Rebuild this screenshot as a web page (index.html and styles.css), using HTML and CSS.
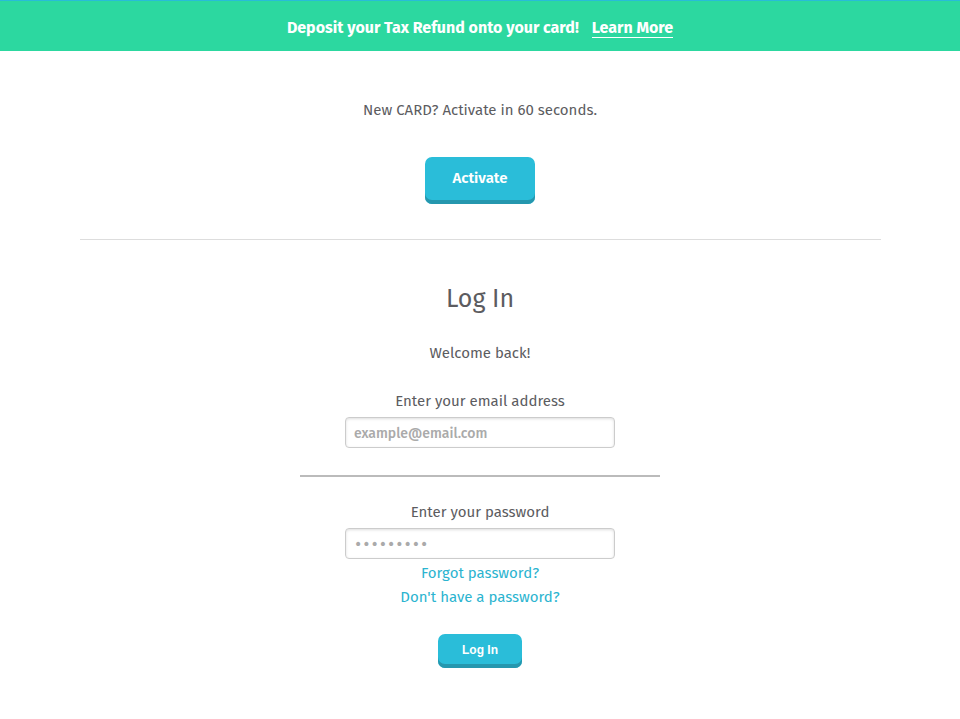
FILE: index.html
```html
<!DOCTYPE html>
<html lang="en">
<head>
<meta charset="utf-8">
<meta name="viewport" content="width=device-width, initial-scale=1">
<title>Log In</title>
<link rel="stylesheet" href="styles.css">
</head>
<body>
<header class="banner">
  <p class="banner-text">Deposit your Tax Refund onto your card!</p>
  <a class="banner-link" href="#">Learn More</a>
</header>
<main class="page">
  <section class="activate">
    <p class="copy">New CARD? Activate in 60 seconds.</p>
    <button class="button button-large" type="button">Activate</button>
  </section>
  <section class="login">
    <h1 class="title">Log In</h1>
    <p class="copy">Welcome back!</p>
    <form class="form">
      <div class="field field-email">
        <label for="email">Enter your email address</label>
        <input id="email" type="email" placeholder="example@email.com">
      </div>
      <div class="field">
        <label for="password">Enter your password</label>
        <input id="password" class="password" type="password" placeholder="•••••••••">
      </div>
      <nav class="links">
        <a href="#">Forgot password?</a>
        <a href="#">Don't have a password?</a>
      </nav>
      <button class="button button-small" type="submit">Log In</button>
    </form>
  </section>
</main>
</body>
</html>
```

FILE: styles.css
```css
* {
  box-sizing: border-box;
}

body {
  margin: 0;
  background: #fff;
  color: #5c5c5f;
  font: 400 15px/24px "Fira Sans", "Noto Sans", sans-serif;
}

p,
h1 {
  margin: 0;
}

.banner {
  display: flex;
  align-items: baseline;
  justify-content: center;
  gap: 13px;
  padding: 15px 16px 11px;
  border-top: 1px solid #29bcd8;
  background: #2cd8a0;
  color: #fff;
  font-size: 16px;
  font-weight: 700;
}

.banner-link {
  border-bottom: 1px solid #fff;
  color: #fff;
  line-height: 18px;
  text-decoration: none;
}

.page {
  max-width: 801px;
  margin: 0 auto;
  text-align: center;
}

.activate {
  padding: 47px 0 35px;
  border-bottom: 1px solid #ddd;
}

.button {
  border: 0;
  border-radius: 7px;
  background: #2abdd9;
  box-shadow: inset 0 -4px #2597ae;
  color: #fff;
  font: inherit;
  font-weight: 600;
}

.button-large {
  margin-top: 35px;
  padding: 9px 27px 14px;
}

.login {
  padding: 43px 0 48px;
}

.title {
  margin-bottom: 26px;
  font-size: 25px;
  font-weight: 400;
  line-height: 32px;
}

.form {
  display: flex;
  flex-direction: column;
  align-items: center;
  margin-top: 24px;
}

.field {
  display: flex;
  flex-direction: column;
  align-items: center;
  gap: 4px;
  width: 360px;
  max-width: 100%;
}

.field-email {
  margin-bottom: 23px;
  padding-bottom: 27px;
  border-bottom: 2px solid #bbb;
}

input {
  width: 270px;
  max-width: 100%;
  height: 31px;
  padding: 5px 8px 4px;
  border: 1px solid #ccc;
  border-radius: 4px;
  box-shadow: inset 0 1px 3px #0002;
  color: #555;
  font: inherit;
  font-size: 14px;
  font-weight: 500;
}

input::placeholder {
  color: #aaa;
}

.password::placeholder {
  font-family: "DejaVu Sans", sans-serif;
}

.links {
  display: flex;
  flex-direction: column;
  margin: 2px 0 25px;
}

.links a {
  color: #2bb4d0;
  text-decoration: none;
}

.button-small {
  padding: 4px 24px 6px;
  font-family: "Liberation Sans", Arial, sans-serif;
  font-size: 12px;
  font-weight: 700;
}
```
